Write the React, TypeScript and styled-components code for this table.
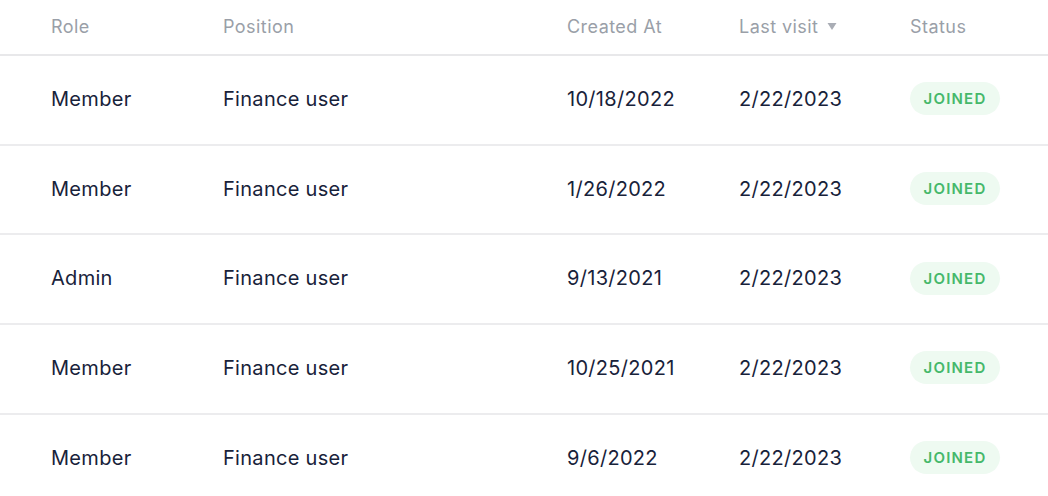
import React from "react";
import styled, { createGlobalStyle } from "styled-components";

const Global = createGlobalStyle`
  html, body { margin: 0; padding: 0; background: #ffffff; }
  body { font-family: Inter, "Noto Sans", sans-serif; overflow: hidden; }
`;

const Table = styled.div`
  width: 1048px;
  display: flex;
  flex-direction: column;
`;

const cols = "51px 172px 344px 172px 171px 138px";

const HeaderRow = styled.div`
  display: grid;
  grid-template-columns: ${cols};
  height: 54px;
  align-items: center;
  border-bottom: 2px solid #e8e8ea;
`;

const HeadCell = styled.div`
  font-size: 18px;
  color: #9a9fa8;
  display: flex;
  align-items: center;
  gap: 9px;
  white-space: nowrap;
  letter-spacing: 0.45px;
  margin-top: -2px;
`;

const Row = styled.div<{ $last?: boolean }>`
  display: grid;
  grid-template-columns: ${cols};
  height: 87.7px;
  align-items: center;
  border-bottom: ${(p) => (p.$last ? "none" : "2px solid #ececee")};
`;

const Cell = styled.div`
  font-size: 20px;
  color: #18223a;
  white-space: nowrap;
  letter-spacing: 0.3px;
  margin-top: -2px;
`;

const Badge = styled.span`
  display: inline-flex;
  align-items: center;
  justify-content: center;
  width: 90px;
  height: 33px;
  border-radius: 17px;
  background: #eefaf1;
  color: #45b86a;
  font-size: 15px;
  font-weight: 600;
  letter-spacing: 1.2px;
`;

const SortIcon = () => (
  <svg width="10" height="9" viewBox="0 0 10 9">
    <path d="M0.5 1 L9.5 1 L5 8 Z" fill="#a9adb5" />
  </svg>
);

const rows = [
  ["Member", "Finance user", "10/18/2022", "2/22/2023"],
  ["Member", "Finance user", "1/26/2022", "2/22/2023"],
  ["Admin", "Finance user", "9/13/2021", "2/22/2023"],
  ["Member", "Finance user", "10/25/2021", "2/22/2023"],
  ["Member", "Finance user", "9/6/2022", "2/22/2023"],
];

export default function App() {
  return (
    <>
      <Global />
      <Table>
        <HeaderRow>
          <div />
          <HeadCell>Role</HeadCell>
          <HeadCell>Position</HeadCell>
          <HeadCell>Created At</HeadCell>
          <HeadCell>
            Last visit <SortIcon />
          </HeadCell>
          <HeadCell>Status</HeadCell>
        </HeaderRow>
        {rows.map((r, i) => (
          <Row key={i} $last={i === rows.length - 1}>
            <div />
            <Cell>{r[0]}</Cell>
            <Cell>{r[1]}</Cell>
            <Cell>{r[2]}</Cell>
            <Cell>{r[3]}</Cell>
            <Cell>
              <Badge>JOINED</Badge>
            </Cell>
          </Row>
        ))}
      </Table>
    </>
  );
}
